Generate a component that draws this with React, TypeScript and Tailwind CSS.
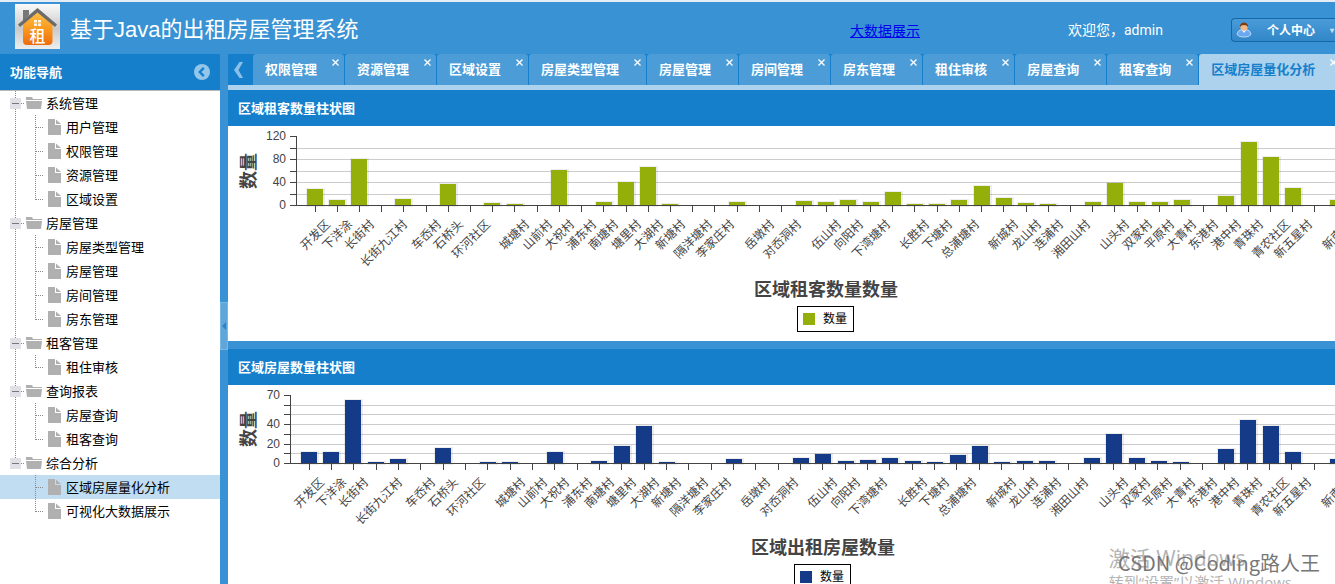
import React from "react";

const NAV = [
  { name: "系统管理", items: ["用户管理", "权限管理", "资源管理", "区域设置"] },
  { name: "房屋管理", items: ["房屋类型管理", "房屋管理", "房间管理", "房东管理"] },
  { name: "租客管理", items: ["租住审核"] },
  { name: "查询报表", items: ["房屋查询", "租客查询"] },
  { name: "综合分析", items: ["区域房屋量化分析", "可视化大数据展示"] },
];

const TABS = [
  "权限管理",
  "资源管理",
  "区域设置",
  "房屋类型管理",
  "房屋管理",
  "房间管理",
  "房东管理",
  "租住审核",
  "房屋查询",
  "租客查询",
  "区域房屋量化分析",
];

const ACTIVE = "区域房屋量化分析";

// Village names keyed by their slot on the category axis; slots left out have no caption.
const VILLAGES: [number, string][] = [
  [0, "开发区"], [1, "下洋涂"], [2, "长街村"], [3, "长街九江村"], [5, "车岙村"], [6, "石桥头"],
  [7, "环河社区"], [9, "城塘村"], [10, "山前村"], [11, "大祝村"], [12, "浦东村"], [13, "南塘村"],
  [14, "塘里村"], [15, "大湖村"], [16, "新塘村"], [17, "隔洋塘村"], [18, "李家庄村"], [20, "岳墩村"],
  [21, "对岙洞村"], [23, "伍山村"], [24, "向阳村"], [25, "下湾塘村"], [27, "长胜村"], [28, "下塘村"],
  [29, "总浦塘村"], [31, "新城村"], [32, "龙山村"], [33, "连浦村"], [34, "湘田山村"], [36, "山头村"],
  [37, "双家村"], [38, "平原村"], [39, "大青村"], [40, "东港村"], [41, "港中村"], [42, "青珠村"],
  [43, "青农社区"], [44, "新五星村"], [46, "新南村"],
];

const TENANTS = [
  28, 9, 80, 0, 11, 0, 37, 0, 4, 2, 0, 61, 0, 6, 40, 66, 2, 0, 0, 6, 0, 0, 7, 5, 9, 5, 23, 2, 2, 9,
  33, 12, 4, 2, 0, 5, 38, 5, 5, 9, 0, 16, 110, 84, 30, 0, 9,
];

const HOUSES = [
  11, 11, 65, 1, 4, 0, 15, 0, 1, 1, 0, 11, 0, 2, 17, 38, 1, 0, 0, 4, 0, 0, 5, 9, 2, 3, 5, 2, 1, 8,
  17, 1, 2, 2, 0, 5, 30, 5, 2, 1, 0, 14, 44, 38, 11, 0, 4,
];

const FONT = "font-['Noto_Sans_CJK_SC',sans-serif]";

function Logo() {
  return (
    <svg width="45" height="45" viewBox="0 0 45 45" className="mb-1 shrink-0" aria-hidden="true">
      <defs>
        <linearGradient id="plate" x1="0" y1="0" x2="0" y2="1">
          <stop offset="0" stopColor="#fafafa" />
          <stop offset="0.55" stopColor="#c9c9c9" />
          <stop offset="1" stopColor="#eeeeee" />
        </linearGradient>
        <linearGradient id="house" x1="0" y1="0" x2="0" y2="1">
          <stop offset="0" stopColor="#ffc24a" />
          <stop offset="0.5" stopColor="#fb9a20" />
          <stop offset="1" stopColor="#ee6c0c" />
        </linearGradient>
      </defs>
      <rect width="45" height="45" fill="url(#plate)" />
      <path d="M8 6h6v5l-6 6z" fill="#777" />
      <path d="M8 20 22.500 7.500 37.500 20V37q0 4-4 4H12q-4 0-4-4z" fill="url(#house)" />
      <path d="M3 20.500 22.500 4 42 20.500l-2 2.500L22.500 8.500 5 23z" fill="#6b6b6b" />
      <path d="M19 16h3v2.500h-3zm4 0h3v2.500h-3zm-4 3.500h3V22h-3zm4 0h3V22h-3z" fill="#fff6e0" />
      <text x="22.500" y="38" textAnchor="middle" fontSize="16" fontWeight="500" fill="#fff">租</text>
    </svg>
  );
}

function UserIcon() {
  return (
    <svg width="16" height="16" viewBox="0 0 16 16" className="shrink-0" aria-hidden="true">
      <path d="M1 12q1-4 5-4.500h4q4 .5 5 4.500-1 3-7 3t-7-3z" fill="#6aa9f2" stroke="#d7eaff" strokeWidth="0.8" />
      <path d="M5.500 8h5L8 11z" fill="#e9f3ff" />
      <circle cx="8" cy="5.200" r="3.600" fill="#f2b886" />
      <path d="M4 5Q3.500 1 8 .5 12.500 1 12 5q-1-2-4-2T4 5z" fill="#7a3d12" />
    </svg>
  );
}

function Header() {
  return (
    <header className="flex h-[54px] shrink-0 items-center overflow-hidden border-t-2 border-[#e4edf5] bg-[#3892d3] pl-[15px] text-white">
      <Logo />
      <h1 className="ml-[10px] mt-1 whitespace-nowrap font-['Liberation_Sans','Noto_Sans_CJK_SC',sans-serif] text-[22px] leading-8">
        基于Java的出租房屋管理系统
      </h1>
      <a href="#bigdata" className="ml-auto mr-[148px] mt-1 whitespace-nowrap text-[14px] text-[#0000ee] underline">
        大数据展示
      </a>
      <span className="mt-1 w-[95px] whitespace-nowrap font-['Roboto','Noto_Sans_CJK_SC',sans-serif] text-[14px]">
        欢迎您，admin
      </span>
      <button
        type="button"
        className="ml-[68px] mt-1 flex h-6 w-[104px] items-center gap-[15px] overflow-hidden whitespace-nowrap rounded-l border border-r-0 border-[#1568a8] bg-linear-to-b from-[#4a9bd8] to-[#3187c8] pl-1 text-[12px] font-bold"
      >
        <UserIcon />
        个人中心
        <span className="text-[8px] text-[#c5e0f5]">▾</span>
      </button>
    </header>
  );
}

function TreeLines({ child, last, guide }: { child: boolean; last: boolean; guide: boolean }) {
  const w = child ? 46 : 25;
  return (
    <svg width={w} height="24" viewBox={`0 0 ${w} 24`} className="shrink-0" aria-hidden="true" shapeRendering="crispEdges">
      <g stroke="#888" strokeDasharray="1 1" fill="none">
        {guide && <path d="M15.500 0V24" />}
        {!child && !guide && <path d="M15.500 0V12" />}
        {child && <path d={last ? "M35.500 0V13" : "M35.500 0V24"} />}
        <path d={child ? "M36 12.500H44" : "M21 12.500H24"} />
      </g>
      {!child && (
        <>
          <rect x="10" y="7" width="11" height="11" fill="#dfe1e6" />
          <path d="M12 12.500H19" stroke="#777" />
        </>
      )}
    </svg>
  );
}

function TreeRow({ name, child, last, guide }: { name: string; child: boolean; last: boolean; guide: boolean }) {
  const selected = name === ACTIVE;
  return (
    <button
      type="button"
      className={`flex h-6 w-full items-center whitespace-nowrap text-left text-[13px] text-black ${selected ? "bg-[#c1ddf1]" : ""}`}
    >
      <TreeLines child={child} last={last} guide={guide} />
      {child ? (
        <svg width="20" height="16" viewBox="0 0 20 16" className="shrink-0" aria-hidden="true">
          <path d="M2 0h7v6h6v10H2z" fill="#b0b0b0" />
          <path d="M10 0.500l5 4.500H10z" fill="#b0b0b0" />
        </svg>
      ) : (
        <svg width="21" height="16" viewBox="0 0 21 16" className="shrink-0" aria-hidden="true">
          <path d="M1 2h6l1 2h9v1H1z" fill="#b0b0b0" />
          <path d="M1 6h16l-1 8H2z" fill="#b0b0b0" />
        </svg>
      )}
      {name}
    </button>
  );
}

function Sidebar() {
  return (
    <aside className="flex w-[220px] shrink-0 flex-col bg-white">
      <div className="flex h-[37px] shrink-0 items-center justify-between border-b border-[#b8b8b8] bg-[#157fcc] pl-[10px] pr-[10px] text-white">
        <h2 className="text-[13px] font-bold">功能导航</h2>
        <button type="button" aria-label="收起导航">
          <svg width="16" height="16" viewBox="0 0 16 16">
            <circle cx="8" cy="8" r="8" fill="#94c6ea" />
            <path d="M9.800 3.800 5.800 8l4 4.200" fill="none" stroke="#157fcc" strokeWidth="2.400" />
          </svg>
        </button>
      </div>
      <ul>
        {NAV.map((group, g) => {
          const guide = g < NAV.length - 1;
          return (
            <li key={group.name}>
              <TreeRow name={group.name} child={false} last={false} guide={guide} />
              <ul>
                {group.items.map((item, i) => (
                  <li key={item}>
                    <TreeRow name={item} child last={i === group.items.length - 1} guide={guide} />
                  </li>
                ))}
              </ul>
            </li>
          );
        })}
      </ul>
    </aside>
  );
}

function TabBar() {
  return (
    <nav className="flex h-9 shrink-0 overflow-hidden border-b-[5px] border-[#add2ed] bg-[#157fcc]">
      <button type="button" aria-label="向左滚动" className="flex w-[25px] shrink-0 items-center justify-center pr-1">
        <svg width="9" height="16" viewBox="0 0 9 16">
          <path d="M9 0H5.500L0 8l5.500 8H9L4.500 8z" fill="#8abfe7" />
        </svg>
      </button>
      {TABS.map((tab) => {
        const active = tab === ACTIVE;
        return (
          <div
            key={tab}
            className={`relative mr-px flex shrink-0 items-center rounded-t-[3px] pb-0.5 pl-3 pr-[27px] ${active ? "bg-[#add2ed] text-[#157fcc]" : "bg-[#4b9cd7] text-white"}`}
          >
            <button type="button" className="whitespace-nowrap text-[13px] font-bold">
              {tab}
            </button>
            <button type="button" aria-label={`关闭${tab}`} className="absolute right-1 top-1 text-white">
              <svg width="9" height="9" viewBox="0 0 9 9">
                <path d="M1.500 1.500l6 6m0-6l-6 6" stroke="currentColor" strokeWidth="1.300" />
              </svg>
            </button>
          </div>
        );
      })}
    </nav>
  );
}

type ChartProps = {
  title: string;
  color: string;
  data: number[];
  axisX: number;
  top: number;
  base: number;
  max: number;
  step: number;
  first: number;
  pitch: number;
  barPitch: number;
  labels: number[];
  center: number;
};

function BarChart({ title, color, data, axisX, top, base, max, step, first, pitch, barPitch, labels, center }: ChartProps) {
  const y = (v: number) => Math.round(base - (v / max) * (base - top));
  const x = (i: number) => first + Math.floor(i * pitch);
  const bar = (i: number) => first - 8 + Math.floor(i * barPitch);
  const levels: number[] = [];
  for (let v = 0; v <= max; v += step) levels.push(v);
  const middle = Math.round((top + base) / 2);
  return (
    <svg width="1196" height="215" viewBox="0 0 1196 215" role="img" aria-label={title} className="block max-w-none">
      <g stroke="#ccc" shapeRendering="crispEdges">
        {levels.slice(1, -1).map((v) => (
          <path key={v} d={`M${axisX} ${y(v) + 0.5}H1196`} />
        ))}
      </g>
      {data.map((v, i) =>
        v > 0 ? (
          <g key={i} shapeRendering="crispEdges">
            <rect x={bar(i) - 1} y={y(v) - 1} width="19" height={base - y(v) + 3} fill="#000" opacity="0.07" />
            <rect x={bar(i)} y={y(v)} width="16" height={base - y(v)} fill={color} />
          </g>
        ) : null
      )}
      <g stroke="#444" shapeRendering="crispEdges">
        <path d={`M${axisX + 0.5} ${top}V${base + 1}M${axisX - 6} ${base + 0.5}H1196`} />
        {levels.map((v) => (
          <path key={v} d={`M${axisX - 6} ${y(v) + 0.5}H${axisX}`} />
        ))}
        {data.map((_, i) => (
          <path key={i} d={`M${x(i) + 0.5} ${base}V${base + 7}`} />
        ))}
      </g>
      <g fontSize="12" fill="#444" textAnchor="end" className="font-['Liberation_Sans',sans-serif]">
        {labels.map((v) => (
          <text key={v} x={axisX - 10} y={y(v) + 4}>
            {v}
          </text>
        ))}
      </g>
      <g fontSize="12" fill="#444" textAnchor="end">
        {VILLAGES.map(([i, name]) => {
          const shift = name.length === 3 ? 16 : name.length === 4 ? 21 : 27;
          return (
            <text key={i} transform={`translate(${x(i) + shift} ${base + 20}) rotate(-45)`}>
              {name}
            </text>
          );
        })}
      </g>
      <text transform={`translate(27 ${middle}) rotate(-90)`} textAnchor="middle" fontSize="18" fontWeight="700" fill="#444">
        数量
      </text>
      <text x={center} y={base + 91} textAnchor="middle" fontSize="18" fontWeight="700" fill="#444">
        {title}
      </text>
      <rect x={center - 28.5} y={base + 101.5} width="56" height="25" fill="#fff" stroke="#000" />
      <rect x={center - 23} y={base + 108} width="12" height="12" fill={color} />
      <text x={center - 3} y={base + 118} fontSize="12" fill="#000">
        数量
      </text>
    </svg>
  );
}

function Panel({ title, children }: { title: string; children: React.ReactNode }) {
  return (
    <section className="shrink-0 overflow-hidden bg-white">
      <h2 className="flex h-9 items-center bg-[#157fcc] pl-[10px] text-[13px] font-bold text-white">{title}</h2>
      {children}
    </section>
  );
}

export default function App() {
  return (
    <div className={`relative flex h-screen flex-col overflow-hidden bg-[#3892d3] ${FONT}`}>
      <Header />
      <div className="flex min-h-0 flex-1">
        <Sidebar />
        <div className="flex w-2 shrink-0 items-center bg-[#3892d3]">
          <button
            type="button"
            aria-label="折叠导航"
            className="mt-[14px] flex h-12 w-2 items-center justify-center border border-[#7ab8e4] bg-[#5fa7db]"
          >
            <svg width="4" height="8" viewBox="0 0 4 8">
              <path d="M4 0V8L0 4z" fill="#2b83c6" />
            </svg>
          </button>
        </div>
        <main className="flex min-w-0 flex-1 flex-col overflow-hidden">
          <TabBar />
          <div className="flex min-h-0 flex-1 flex-col gap-2 overflow-hidden">
            <Panel title="区域租客数量柱状图">
              <BarChart
                title="区域租客数量数量"
                color="#94ae0a"
                data={TENANTS}
                axisX={68}
                top={10}
                base={79}
                max={120}
                step={20}
                first={87}
                pitch={22.22}
                barPitch={22.24}
                labels={[120, 80, 40, 0]}
                center={598}
              />
            </Panel>
            <Panel title="区域房屋数量柱状图">
              <BarChart
                title="区域出租房屋数量"
                color="#153a87"
                data={HOUSES}
                axisX={62}
                top={10}
                base={78}
                max={70}
                step={10}
                first={81}
                pitch={22.34}
                barPitch={22.38}
                labels={[70, 40, 20, 0]}
                center={595}
              />
            </Panel>
          </div>
        </main>
      </div>
      <div className="pointer-events-none absolute -bottom-2 right-[43px] whitespace-nowrap font-['Open_Sans','Noto_Sans_CJK_SC',sans-serif] text-[#b4b4b4]">
        <p className="text-[21px] leading-7">激活 Windows</p>
        <p className="text-[15px] leading-5">转到“设置”以激活 Windows</p>
      </div>
      <p className="pointer-events-none absolute bottom-[7px] right-[15px] whitespace-nowrap text-[20px] leading-7 text-[#777]">
        CSDN @Coding路人王
      </p>
    </div>
  );
}
